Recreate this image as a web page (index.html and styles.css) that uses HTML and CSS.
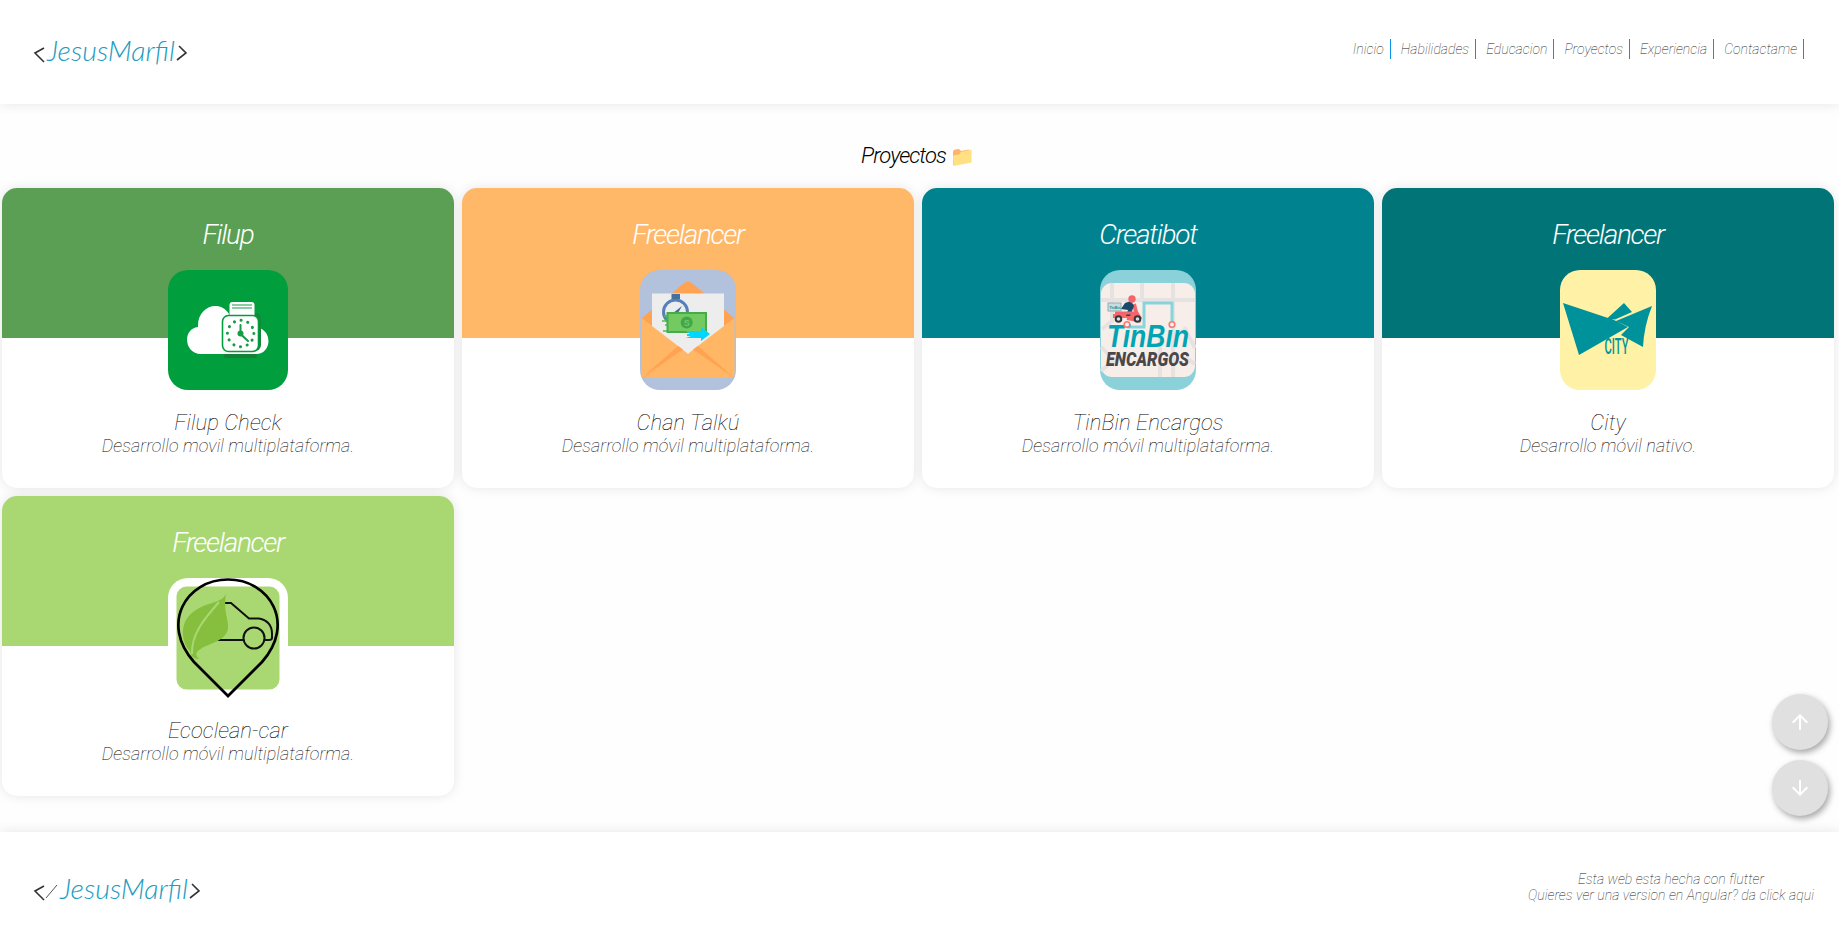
FILE: index.html
```html
<!DOCTYPE html>
<html lang="es">
<head>
<meta charset="utf-8">
<title>Jesus Marfil</title>
<link rel="stylesheet" href="styles.css">
</head>
<body>
<header class="header">
  <svg class="logo" width="160" height="50" viewBox="0 0 160 50">
    <path class="bracket" d="M10 9 L1 14 L10 23 M145 7 L152 14 L143 21"/>
    <text class="signature" x="13" y="22" textLength="128" lengthAdjust="spacingAndGlyphs">JesusMarfil</text>
  </svg>
  <nav class="nav">
    <a class="link">Inicio</a><a class="link">Habilidades</a><a class="link">Educacion</a><a class="link">Proyectos</a><a class="link">Experiencia</a><a class="link">Contactame</a>
  </nav>
</header>
<main class="main">
  <h1 class="heading">Proyectos
    <svg class="folder" width="20" height="20" viewBox="0 0 20 20"><path fill="#ffb36b" d="M1 5 Q1 3 3 2.600 L7 2 L9 4 L17 2.500 V12 L1 18Z"/><path fill="#ffe082" d="M1 8.500 L7 7.500 L9 5 L19.500 2.500 V15.500 L1.500 19Z"/></svg>
  </h1>
  <section class="grid">
    <article class="card">
      <div class="band green"><h2 class="company">Filup</h2></div>
      <svg class="icon" width="120" height="120" viewBox="0 0 120 120">
        <rect width="120" height="120" rx="20" fill="#009e3c"/>
        <path fill="#fff" d="M33 84C16 84 14 59 30 57C29 36 52 29 61 44H78L91 58C105 62 103 84 88 84Z"/>
        <rect x="56" y="84" width="33" height="4" rx="2" fill="#168035"/>
        <rect x="59" y="43" width="34" height="38" rx="6" fill="#16863a"/>
        <rect x="61.500" y="32" width="25" height="15" rx="3" fill="#fff"/>
        <path d="M64 35H84M64 38H84" stroke="#169b46" stroke-width="1"/>
        <rect x="54.500" y="45.500" width="36" height="36" rx="6" fill="#fff" stroke="#009e3c" stroke-width="1.600"/>
        <circle cx="72.700" cy="63.500" r="13.200" fill="none" stroke="#169b46" stroke-width="3" stroke-linecap="round" stroke-dasharray=".1 6.811"/>
        <path d="M72.500 55V64L80 71" fill="none" stroke="#169b46" stroke-width="2" stroke-linecap="round"/><circle cx="72.500" cy="63.500" r="3" fill="#169b46"/>
      </svg>
      <div class="about"><h3 class="name">Filup Check</h3><p class="kind">Desarrollo movil multiplataforma.</p></div>
    </article>
    <article class="card">
      <div class="band orange"><h2 class="company">Freelancer</h2></div>
      <svg class="icon" width="96" height="120" viewBox="0 0 96 120">
        <rect width="96" height="120" rx="20" fill="#b2c1dc"/>
        <path fill="#ffa353" d="M2 48 L43 14 Q48 9 53 14 L94 48 V108H2Z"/>
        <path fill="#ededed" d="M12 23.500H84V58L48 85L12 58Z"/>
        <path fill="#ffb665" d="M1.500 48 L42 79 L3 108 Q1.500 106 1.500 102Z M94.500 48 L54 79 L93 108 Q94.500 106 94.500 102Z"/>
        <path fill="#ffb665" d="M4 108 L42 79 L48 84 L54 79 L93 108Z"/>
        <path fill="#ffa353" d="M4 106 L38 76 L43 79.500Z M92 106 L58 76 L53 79.500Z"/>
        <circle cx="35.500" cy="42" r="12" fill="#ededed" stroke="#557fb8" stroke-width="3"/>
        <path fill="#46719f" d="M31.500 24H40V29H31.500Z M33 43L42 36L37 45Z"/>
        <path stroke="#50bd50" stroke-width="1.500" d="M24 46H31M22 51H30M25 55H30M23 61H31"/>
        <rect x="27.500" y="43" width="38.500" height="19" fill="#73ca61" stroke="#45ac4b" stroke-width="2"/>
        <circle cx="46.700" cy="52.500" r="6" fill="#42a64a"/><text x="46.700" y="56" class="coin">S</text>
        <path fill="#00d7ff" d="M46 61H61V57L70 64L61 71V68H46L51 66H47V64H50Z"/>
      </svg>
      <div class="about"><h3 class="name">Chan Talkú</h3><p class="kind">Desarrollo móvil multiplataforma.</p></div>
    </article>
    <article class="card">
      <div class="band cyan"><h2 class="company">Creatibot</h2></div>
      <svg class="icon" width="96" height="120" viewBox="0 0 96 120">
        <rect width="96" height="120" rx="20" fill="#8bd1d9"/>
        <rect x="1" y="13" width="94" height="94" rx="11" fill="#f8eee9"/>
        <path d="M12 13V51L2 59M42 13V30M73 13V107M1 30H95M60 68V107M1 77L14 90L1 101M84 57L95 78M86 88L95 94" fill="none" stroke="#e7e2e2" stroke-width="4"/>
        <path d="M27 57H44V33H72V54" fill="none" stroke="#87d4da" stroke-width="3"/>
        <path d="M13 46H35M34 34L38 50L27 48" stroke="#f86666" stroke-width="4" fill="none"/>
        <rect x="8" y="33" width="13" height="8" fill="#c8dddd" stroke="#96acac"/><text x="9.500" y="38.500" class="box">TinBin</text>
        <path fill="#18486a" d="M25 33L31 31L34 36L30 46H26L28 40L21 39Z"/><circle cx="32" cy="29" r="3.700" fill="#f4656b"/>
        <path d="M15 43H37L41 49" fill="none" stroke="#f4656b" stroke-width="3"/>
        <g fill="#ddd" stroke="#35353d" stroke-width="2"><circle cx="18.500" cy="49" r="2.800"/><circle cx="37.500" cy="49" r="2.800"/></g>
        <text x="7" y="76.500" class="tinbin" textLength="82" lengthAdjust="spacingAndGlyphs">TinBin</text>
        <text x="6" y="96" class="encargos" textLength="83" lengthAdjust="spacingAndGlyphs">ENCARGOS</text>
        <g fill="#f8eee9" stroke="#f27b79" stroke-width="1.600"><circle cx="27" cy="54.500" r="2.800"/><circle cx="72" cy="54.500" r="2.800"/></g>
      </svg>
      <div class="about"><h3 class="name">TinBin Encargos</h3><p class="kind">Desarrollo móvil multiplataforma.</p></div>
    </article>
    <article class="card">
      <div class="band teal"><h2 class="company">Freelancer</h2></div>
      <svg class="icon" width="96" height="120" viewBox="0 0 96 120">
        <rect width="96" height="120" rx="20" fill="#fff1a5"/>
        <path fill="#00929a" d="M3 33L54 50L68 57L19 85Z M47 48.500L64 33L72 42L55 49.500Z M56 51L92 36Q84 56 83 77L61 65L69 57Z"/>
        <text x="44.500" y="84" class="city" textLength="24" lengthAdjust="spacingAndGlyphs">CITY</text>
      </svg>
      <div class="about"><h3 class="name">City</h3><p class="kind">Desarrollo móvil nativo.</p></div>
    </article>
    <article class="card">
      <div class="band lime"><h2 class="company">Freelancer</h2></div>
      <svg class="icon" width="120" height="120" viewBox="0 0 120 120">
        <rect width="120" height="120" rx="20" fill="#fff"/><rect x="8.500" y="8.500" width="103" height="103" rx="10" fill="#a9d873"/>
        <path d="M60 118L26 84C-8 46 18 1.500 60 1.500S128 46 94 84Z" fill="none" stroke="#000" stroke-width="2.700"/>
        <path d="M50 25H63L81 40.500H91Q104 43 104 56V60Q104 62 101 62H96M76 62H48" fill="none" stroke="#111" stroke-width="2"/>
        <circle cx="86" cy="60" r="10.500" fill="none" stroke="#111" stroke-width="2"/>
        <path fill="#86bf3e" d="M58 15C55 27 35 22 20 39C12 49 14 65 22 73C23 79 26 81 31 81C26 76 29 73 34 70C43 65 57 63 60 51C61 41 55 35 58 15Z"/>
        <path d="M51 24C37 40 23 56 24 76" fill="none" stroke="#a9d873" stroke-width="2"/>
      </svg>
      <div class="about"><h3 class="name">Ecoclean-car</h3><p class="kind">Desarrollo móvil multiplataforma.</p></div>
    </article>
  </section>
</main>
<footer class="footer">
  <svg class="logo" width="180" height="50" viewBox="0 0 180 50">
    <path class="bracket" d="M10 8 L1 13 L10 22 M158 6 L165 13 L156 20"/><path class="slash" d="M23 7L12 20"/>
    <text class="signature" x="26" y="21" textLength="128" lengthAdjust="spacingAndGlyphs">JesusMarfil</text>
  </svg>
  <p class="credit">Esta web esta hecha con flutter<br>Quieres ver una version en Angular? da click aqui</p>
</footer>
<div class="fabs">
  <button class="fab"><svg width="24" height="24" viewBox="0 0 24 24"><path fill="#fff" d="M4 12l1.410 1.410L11 7.830V20h2V7.830l5.580 5.590L20 12l-8-8-8 8z"/></svg></button>
  <button class="fab"><svg width="24" height="24" viewBox="0 0 24 24"><path fill="#fff" d="M20 12l-1.410-1.410L13 16.170V4h-2v12.170l-5.580-5.590L4 12l8 8 8-8z"/></svg></button>
</div>
</body>
</html>
```
FILE: styles.css
```css
* { box-sizing: border-box; margin: 0; padding: 0; }
body { height: 932px; overflow: hidden; display: flex; flex-direction: column; background: #fefefe; font-family: Roboto, sans-serif; font-style: italic; font-weight: 100; color: #000; }
.header { height: 104px; flex: none; display: flex; justify-content: space-between; padding: 39px 35px 0 34px; background: #fff; box-shadow: 0 0 12px rgba(0,0,0,.1); }
.logo { overflow: visible; }
.bracket { fill: none; stroke: #333; stroke-width: 1.6; }
.slash { stroke: #555; stroke-width: 1; }
.signature { font: italic 300 27px Lato, sans-serif; fill: #219cc0; }
.nav { display: flex; gap: 10px; height: 20px; }
.link { border-right: 1px solid #0794e8; padding-right: 6px; font-size: 14px; line-height: 20px; color: #222; letter-spacing: .02px; }
.main { flex: none; height: 728px; }
.heading { height: 84px; padding-top: 39px; padding-right: 6px; display: flex; justify-content: center; gap: 6px; font-size: 22px; line-height: 26px; font-weight: 300; letter-spacing: -.95px; }
.folder { margin-top: 4px; }
.grid { display: grid; grid-template-columns: repeat(4, 452px); grid-auto-rows: 300px; gap: 8px; padding-left: 2px; }
.card { display: flex; flex-direction: column; align-items: center; border-radius: 15px; background: #fff; overflow: hidden; text-align: center; box-shadow: 0 0 12px rgba(0,0,0,.1); }
.band { width: 100%; height: 150px; flex: none; padding-top: 31px; }
.green { background: #5a9f54; }
.orange { background: #ffb768; }
.cyan { background: #00838f; }
.teal { background: #007477; }
.lime { background: #a9d873; }
.company { color: #fff; font-size: 28px; line-height: 32px; font-weight: 300; letter-spacing: -1.3px; }
.icon { flex: none; margin-top: -68px; }
.about { padding-top: 20px; }
.name { font-size: 22px; line-height: 26px; font-weight: 100; letter-spacing: .08px; }
.kind { font-size: 18px; line-height: 20px; letter-spacing: .08px; }
.coin { font: bold 9px "Liberation Sans", sans-serif; fill: #73ca61; text-anchor: middle; }
.box { font: bold 3.5px "Liberation Sans", sans-serif; fill: #168894; }
.tinbin { font: italic bold 31px "Liberation Sans", sans-serif; fill: #00a4b3; }
.encargos { font: italic 900 20px Roboto, sans-serif; fill: #48484b; }
.city { font: 500 22px Roboto, sans-serif; fill: #00929a; }
.footer { flex: none; height: 100px; display: flex; justify-content: space-between; padding: 39px 25px 0 34px; background: #fff; box-shadow: 0 0 12px rgba(0,0,0,.1); }
.footer .logo { margin-top: 7px; }
.credit { font-size: 14px; line-height: 16px; text-align: center; color: #222; letter-spacing: .06px; }
.fabs { position: fixed; right: 11px; bottom: 116px; display: grid; gap: 10px; }
.fab { width: 56px; height: 56px; border: 0; border-radius: 50%; background: #e0e0e0; display: grid; place-items: center; box-shadow: 2px 3px 6px rgba(0,0,0,.35); }
```
